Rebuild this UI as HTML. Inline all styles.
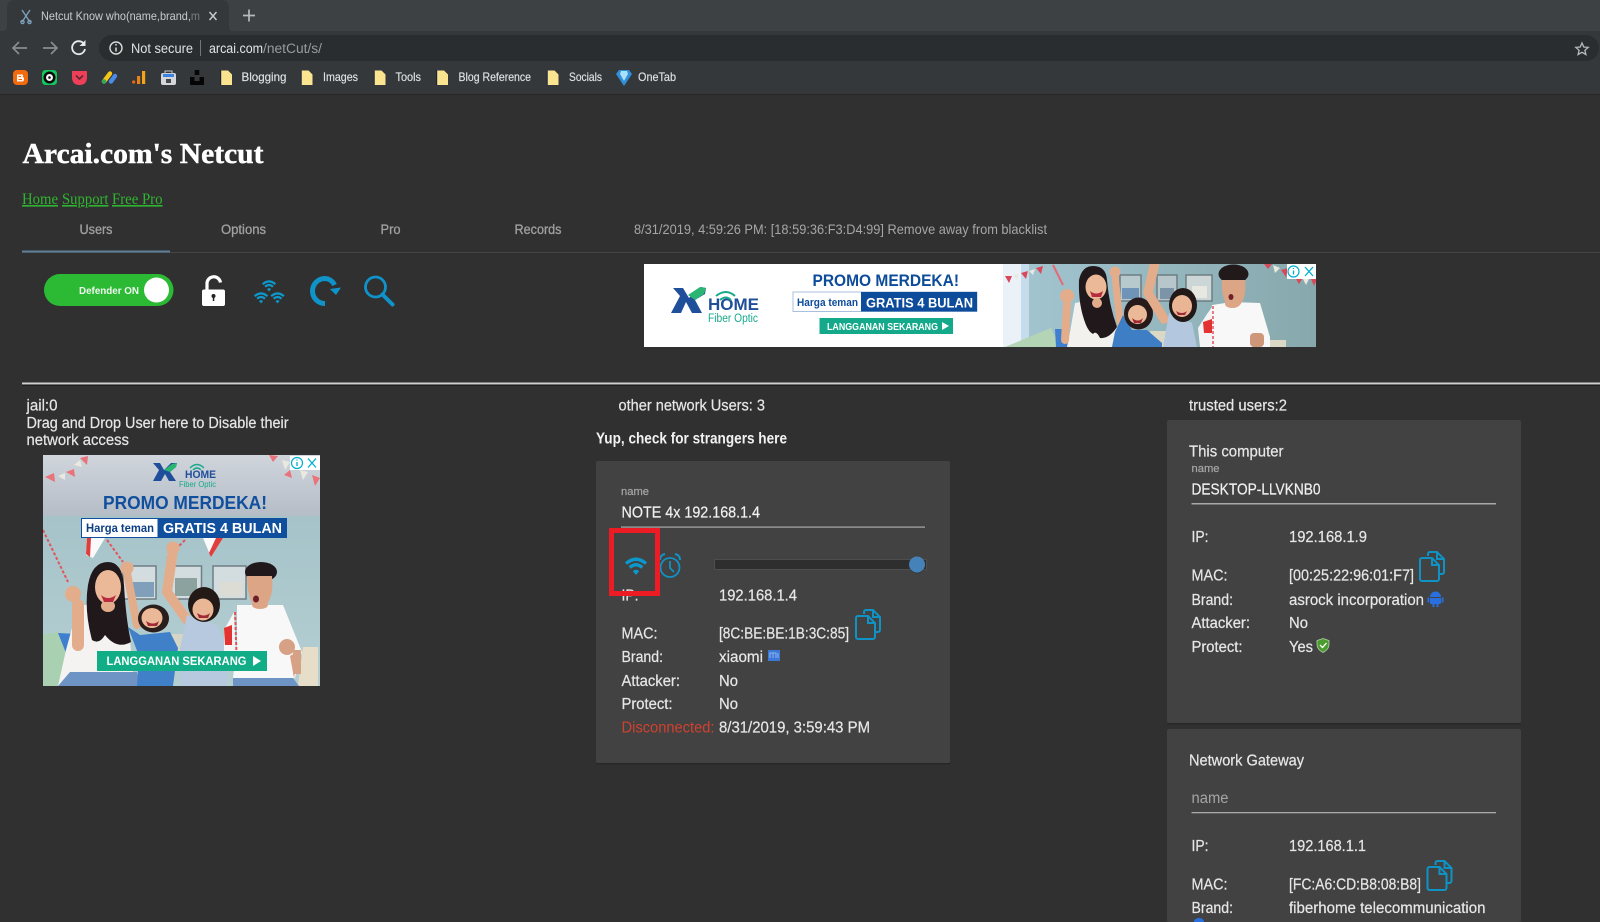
<!DOCTYPE html>
<html lang="en"><head><meta charset="utf-8"><title>Netcut</title>
<style>
html,body{margin:0;padding:0;width:1600px;height:922px;overflow:hidden;background:#303030}
svg{display:block;position:absolute;left:0;top:0;filter:blur(.3px)}
text{font-family:"Liberation Sans",sans-serif;fill:#e6e6e6;stroke:#e6e6e6;stroke-width:.22px;font-size:15.5px;white-space:pre}
text[style]{stroke:none}
.se{font-family:"Liberation Serif",serif}
.g{fill:#a0a0a0;stroke:#a0a0a0;stroke-width:.3px;font-size:13.5px}
.b{fill:#dfe1e3;stroke:#dfe1e3;stroke-width:.15px;font-size:12px}
.l{fill:#a5a5a5;stroke:#a5a5a5;font-size:11px}
</style></head><body>
<svg width="1600" height="922" viewBox="0 0 1600 922" xmlns="http://www.w3.org/2000/svg">
<defs>
<g id="copy" fill="none" stroke="#0f93c4" stroke-width="2">
<path d="M9 5V3a2 2 0 0 1 2-2h7l7 7v13a2 2 0 0 1-2 2h-3"/>
<path d="M3 7h10l7 7v14a2 2 0 0 1-2 2H3a2 2 0 0 1-2-2V9a2 2 0 0 1 2-2z"/>
<path d="M13 7v7h7M18 1v7h7"/>
</g>
<g id="wifi" fill="none" stroke="#0d98cc">
<path d="M1 6.500Q11-2 21 6.500" stroke-width="3.400"/>
<path d="M4.800 10.500Q11 5 17.200 10.500" stroke-width="3.400"/>
<path d="M7.800 14Q11 11.500 14.200 14L11 18Z" fill="#0d98cc" stroke="none"/>
</g>
<clipPath id="c1"><rect x="644" y="264" width="672" height="83"/></clipPath>
<clipPath id="c2"><rect x="43" y="455" width="277" height="231"/></clipPath>
<linearGradient id="ceil" x1="0" y1="0" x2="0" y2="1"><stop offset="0" stop-color="#d0d5dc"/><stop offset="1" stop-color="#b4bcc6"/></linearGradient>
<linearGradient id="wall" x1="0" y1="0" x2="0" y2="1"><stop offset="0" stop-color="#a5c3c9"/><stop offset="1" stop-color="#b5cfd2"/></linearGradient>
<linearGradient id="wall1" x1="0" y1="0" x2="1" y2="0"><stop offset="0" stop-color="#a3c6d2"/><stop offset="1" stop-color="#87a8ac"/></linearGradient>
</defs>

<!-- browser chrome -->
<rect width="1600" height="31" fill="#3d4144"/>
<rect y="31" width="1600" height="63" fill="#35383b"/>
<rect y="94" width="1600" height="1" fill="#262626"/>
<path d="M0 31h3q4 0 4-4V8q0-8 8-8h206q8 0 8 8v19q0 4 4 4h3z" fill="#35383b"/>
<g fill="none" stroke="#7fa3bd" stroke-width="1.300"><path d="M22 10l8 12M30 10l-8 12"/><circle cx="22.500" cy="22" r="1.600"/><circle cx="29.500" cy="22" r="1.600"/></g>
<text class="b" x="41" y="20" textLength="159" lengthAdjust="spacingAndGlyphs" style="fill:#c9ccce">Netcut Know who(name,brand,m</text>
<rect x="190" y="8" width="12" height="16" fill="#35383b" opacity=".55"/>
<path d="M209.500 12l7 8M216.500 12l-7 8" stroke="#c5c8ca" stroke-width="1.500"/>
<path d="M243 15.500h12M249 9.500v12" stroke="#b7babc" stroke-width="1.700"/>
<path d="M13 48h14M19 42l-6 6 6 6" fill="none" stroke="#898c8f" stroke-width="1.700"/>
<path d="M43 48h14M51 42l6 6-6 6" fill="none" stroke="#898c8f" stroke-width="1.700"/>
<path d="M84 44a6.500 6.500 0 1 0 1 5" fill="none" stroke="#e8e9ea" stroke-width="1.800"/><path d="M85.500 40v6h-6z" fill="#e8e9ea"/>
<rect x="99" y="35" width="1500" height="26" rx="13" fill="#2a2d2f"/>
<circle cx="116" cy="48" r="6" fill="none" stroke="#dcdcdc" stroke-width="1.400"/><path d="M116 47.500v4M116 44v1.500" stroke="#dcdcdc" stroke-width="1.500"/>
<text x="131" y="53" textLength="62" lengthAdjust="spacingAndGlyphs" style="font-size:13.500px;fill:#dfe1e3">Not secure</text>
<rect x="200" y="40" width="1" height="16" fill="#74777a"/>
<text x="209" y="53" textLength="54" lengthAdjust="spacingAndGlyphs" style="font-size:13.500px;fill:#e3e4e5">arcai.com</text>
<text x="263" y="53" textLength="59" lengthAdjust="spacingAndGlyphs" style="font-size:13.500px;fill:#999c9f">/netCut/s/</text>
<path d="M1582 43l1.800 4 4.400.4-3.300 2.900 1 4.300-3.900-2.300-3.900 2.300 1-4.300-3.300-2.900 4.400-.4z" fill="none" stroke="#b8bbbe" stroke-width="1.300"/>

<!-- bookmarks -->
<rect x="13" y="70" width="15" height="15" rx="4" fill="#f26a0e"/><path d="M17 74.500h4a1.500 1.500 0 0 1 2 2v1h1v2a2 2 0 0 1-2 2h-5z" fill="#fdf3ea"/><rect x="18.500" y="76" width="2.500" height="1" fill="#f26a0e"/><rect x="18.500" y="79" width="3.500" height="1" fill="#f26a0e"/>
<rect x="42" y="70" width="15" height="15" rx="3.500" fill="#12c85e"/><circle cx="49.500" cy="77.500" r="6" fill="#0a0a0a"/><circle cx="49.500" cy="77.500" r="3.500" fill="#f4f4f4"/><circle cx="49.500" cy="77.500" r="1.300" fill="#111"/>
<path d="M72 71h15v6q0 8-7.500 8t-7.500-8z" fill="#ee3f58"/><path d="M76 75.500l3.500 3.500 3.500-3.500" fill="none" stroke="#5d2733" stroke-width="1.600"/>
<path d="M104 81.500l6-8" stroke="#f5c518" stroke-width="4.400" stroke-linecap="round"/><path d="M111 81.500l4-5.500" stroke="#4a8ae8" stroke-width="4.400" stroke-linecap="round"/><circle cx="104" cy="81.500" r="2.300" fill="#3aa757"/>
<circle cx="133.700" cy="82" r="1.600" fill="#e96b13"/><rect x="137" y="76" width="3.200" height="8" fill="#e9811a"/><rect x="142" y="71" width="3.200" height="13" fill="#f5a317"/>
<rect x="161" y="73" width="15" height="12" rx="2" fill="#d4d6d9"/><rect x="165" y="71" width="7" height="3" fill="none" stroke="#c6c8cb"/><rect x="163" y="74" width="11" height="3" fill="#3b83e0"/><rect x="166" y="79" width="5" height="4" fill="#45494c"/>
<path d="M190 77h4.500v4h5v-4h4.500v8h-14zM194.700 70h4.600v5h-4.600z" fill="#050505"/>
<g fill="#fbe48f">
<path d="M221 70.500h7l4 4v10.500h-11z"/><path d="M301.500 70.500h7l4 4v10.500h-11z"/><path d="M374.500 70.500h7l4 4v10.500h-11z"/><path d="M437 70.500h7l4 4v10.500h-11z"/><path d="M547.500 70.500h7l4 4v10.500h-11z"/>
</g>
<g fill="#15193a"><rect x="220.300" y="70.500" width=".9" height="14.500"/><rect x="300.800" y="70.500" width=".9" height="14.500"/><rect x="373.800" y="70.500" width=".9" height="14.500"/><rect x="436.300" y="70.500" width=".9" height="14.500"/><rect x="546.800" y="70.500" width=".9" height="14.500"/></g>
<text class="b" x="241.500" y="81" textLength="45" lengthAdjust="spacingAndGlyphs">Blogging</text>
<text class="b" x="323" y="81" textLength="35" lengthAdjust="spacingAndGlyphs">Images</text>
<text class="b" x="395.500" y="81" textLength="25.500" lengthAdjust="spacingAndGlyphs">Tools</text>
<text class="b" x="458.500" y="81" textLength="72.500" lengthAdjust="spacingAndGlyphs">Blog Reference</text>
<text class="b" x="569" y="81" textLength="33" lengthAdjust="spacingAndGlyphs">Socials</text>
<path d="M619 70h10l3 4-8 12-8-12z" fill="#2f8fd8"/><path d="M621 71h6l1 3-4 7-4-7z" fill="#a9e0f8"/>
<text class="b" x="638" y="81" textLength="38" lengthAdjust="spacingAndGlyphs">OneTab</text>

<!-- header -->
<text class="se" x="22.500" y="163" textLength="241" lengthAdjust="spacingAndGlyphs" style="font-size:29px;font-weight:bold;fill:#fff;stroke:#fff;stroke-width:.45px">Arcai.com's Netcut</text>
<text class="se" x="22" y="204" textLength="36" lengthAdjust="spacingAndGlyphs" style="fill:#2fb52f;font-size:16px;text-decoration:underline">Home</text>
<text class="se" x="62" y="204" textLength="46.500" lengthAdjust="spacingAndGlyphs" style="fill:#2fb52f;font-size:16px;text-decoration:underline">Support</text>
<text class="se" x="112" y="204" textLength="50.500" lengthAdjust="spacingAndGlyphs" style="fill:#2fb52f;font-size:16px;text-decoration:underline">Free Pro</text>
<text class="g" x="79.500" y="234" textLength="33" lengthAdjust="spacingAndGlyphs">Users</text>
<text class="g" x="221" y="234" textLength="45" lengthAdjust="spacingAndGlyphs">Options</text>
<text class="g" x="380.500" y="234" textLength="20" lengthAdjust="spacingAndGlyphs">Pro</text>
<text class="g" x="514.500" y="234" textLength="47" lengthAdjust="spacingAndGlyphs">Records</text>
<text class="g" x="634" y="234" textLength="413" lengthAdjust="spacingAndGlyphs" style="fill:#a6a6a6;font-size:14px">8/31/2019, 4:59:26 PM: [18:59:36:F3:D4:99] Remove away from blacklist</text>
<rect x="22" y="252" width="1578" height="1" fill="#454545"/>
<rect x="22" y="250.500" width="148" height="2" fill="#5d7f98"/>

<!-- toolbar icons -->
<rect x="44" y="274" width="129.500" height="32" rx="16" fill="#2cba35"/>
<text x="79" y="294" textLength="60" lengthAdjust="spacingAndGlyphs" style="font-size:10.500px;font-weight:bold;fill:#eef9ee">Defender ON</text>
<ellipse cx="156.500" cy="290" rx="12.500" ry="12.500" fill="#fff"/>
<path d="M207 291v-7a6.800 6.800 0 0 1 13.500-1.500" fill="none" stroke="#fff" stroke-width="3.200"/>
<rect x="202" y="289.500" width="23" height="16.500" rx="2" fill="#fff"/>
<circle cx="213.500" cy="296" r="2" fill="#222"/><rect x="212.800" y="296" width="1.500" height="5" fill="#222"/>
<use href="#wifi" transform="translate(262 280) scale(.64)"/>
<use href="#wifi" transform="translate(254 292) scale(.64)"/>
<use href="#wifi" transform="translate(270.500 292) scale(.64)"/>
<path d="M325 303.500a12.500 12.500 0 0 1 0-25 11 11 0 0 1 9.500 6.500" fill="none" stroke="#0f93c9" stroke-width="5"/>
<path d="M341 287.500l-5 7.500-6-6z" fill="#0f93c9"/>
<circle cx="375.500" cy="287" r="10" fill="none" stroke="#0f93c9" stroke-width="2.800"/>
<path d="M382.500 294.500l10 10" stroke="#0f93c9" stroke-width="4" stroke-linecap="round"/>

<!-- wide ad -->
<g clip-path="url(#c1)">
<rect x="644" y="264" width="672" height="83" fill="#fff"/>
<rect x="1005" y="264" width="311" height="83" fill="url(#wall1)"/>
<rect x="1003" y="264" width="25" height="83" fill="#eaf2f8"/><rect x="1021" y="264" width="8" height="83" fill="#c6dcec"/>
<g fill="#d9485a"><path d="M1005 276l7 0-3 7zM1021 273l7-2-2 8zM1036 268l7-2-2 8zM1264 264l8 0-4 5zM1281 270l7-2-2 9zM1296 279l6 0-3 5zM1311 279l6 0-3 7z"/></g>
<g fill="#e9e9df"><path d="M1013 275l6-1-2 6zM1029 271l6-2-2 6zM1273 265l7 3-5 5zM1303 279l6 0-3 6z"/></g>
<!-- frames -->
<g stroke="#6f7d82" stroke-width="1.500"><rect x="1120" y="275" width="21" height="26" fill="#b7c9cc"/><rect x="1157" y="275" width="20" height="26" fill="#b7c6cb"/><rect x="1186" y="275" width="26" height="26" fill="#cdd6d6"/></g>
<rect x="1122" y="288" width="17" height="11" fill="#6f94b8"/><rect x="1160" y="288" width="14" height="11" fill="#7b94a8"/><rect x="1192" y="286" width="15" height="12" fill="#e8e8e2"/>
<!-- sofa -->
<path d="M1005 347l24-10 22-9 9 19z" fill="#b4d5b5"/><path d="M1055 329l11 0 4 18h-14z" fill="#3f7fd0"/>
<path d="M1150 331h20v16h-20zM1268 340h18v7h-18z" fill="#dcd8c6"/>
<!-- mother -->
<path d="M1075 303l12-2 33 28 1 18h-54l3-15z" fill="#f2f1ee"/>
<path d="M1065 340l2-36" stroke="#e3ad8c" stroke-width="8" stroke-linecap="round"/>
<circle cx="1067" cy="296" r="7" fill="#e3ad8c"/>
<path d="M1053 265l10 20" stroke="#e56b75" stroke-width="2"/>
<path d="M1086 325q-8-20-7-45 3-14 14-14 13 0 14 14 2 25 10 47-8 12-17 11-4-8-7-4-4-2-7-9z" fill="#20181a"/>
<ellipse cx="1096" cy="287" rx="10.500" ry="12.500" fill="#ebb997"/>
<ellipse cx="1097" cy="303" rx="5" ry="5" fill="#e3ad8c"/>
<path d="M1090 291q6 5 13 0l-2 6h-9z" fill="#b52b3f"/>
<!-- kid1 -->
<path d="M1120 323l-5-48" stroke="#e3ad8c" stroke-width="7" stroke-linecap="round"/>
<circle cx="1115" cy="272" r="5.500" fill="#e3ad8c"/>
<path d="M1115 332l8-17 9 15h15l15 13v4h-50z" fill="#3d7ec4"/>
<ellipse cx="1138.500" cy="313.500" rx="14.500" ry="16" fill="#261b1a"/>
<ellipse cx="1137.500" cy="314.500" rx="9.500" ry="9.500" fill="#ebb997"/>
<path d="M1132 318q6 5 11 0l-2 5h-7z" fill="#a02a35"/>
<!-- kid2 -->
<path d="M1164 319l-16-26 7-31" stroke="#e3ad8c" stroke-width="9.500" fill="none" stroke-linecap="round" stroke-linejoin="round"/>
<path d="M1163 347l6-34 23 10 5 24z" fill="#b3c8de"/>
<ellipse cx="1183" cy="305" rx="14" ry="17" fill="#211817"/>
<ellipse cx="1182" cy="306" rx="10" ry="11" fill="#e9b595"/>
<path d="M1176 311q6 4 11 0l-2 4h-7z" fill="#a02a35"/>
<!-- dad -->
<path d="M1212 305l20-3 28 1 10 34v10h-70l10-23z" fill="#f8f8f8"/>
<path d="M1198 328l9-14 5-7 3 38-15 2z" fill="#f4f4f4"/><path d="M1203 322l9-3 0 14-8 0z" fill="#e23232"/>
<path d="M1213 306v41" stroke="#e2545c" stroke-width="1.500" stroke-dasharray="3 2"/>
<ellipse cx="1233.500" cy="274" rx="15" ry="9.500" fill="#21191a"/>
<path d="M1222 280h23q2 18-6 26-6 4-12 0-6-10-5-26z" fill="#dca686"/>
<ellipse cx="1232" cy="304" rx="7" ry="4" fill="#dca686"/>
<ellipse cx="1231" cy="297" rx="2.500" ry="3" fill="#702028"/>
<rect x="1250" y="333" width="14" height="14" rx="4" fill="#cf977a"/>
<!-- logo -->
<path d="M673 288l10 0 6 10 12-11 5 1-1 6-10 6 7 13h-10l-6-11-5 11h-10l9-17z" fill="#1f4e9a"/><path d="M688 295l12-8 6 1-2 6-9 6z" fill="#2ab573"/>
<text x="708" y="310" textLength="51" lengthAdjust="spacingAndGlyphs" style="font-size:17px;font-weight:bold;fill:#1f4e9a">HOME</text>
<path d="M716 296q10-8 19 0M720 300q6-5 11 0" fill="none" stroke="#17a98a" stroke-width="2"/>
<text x="708" y="322" textLength="50" lengthAdjust="spacingAndGlyphs" style="font-size:11.500px;fill:#17a98a">Fiber Optic</text>
<text x="812.500" y="286" textLength="146.500" lengthAdjust="spacingAndGlyphs" style="font-size:16.500px;font-weight:bold;fill:#0d4c9a">PROMO MERDEKA!</text>
<rect x="793" y="292" width="184" height="19.500" fill="#fff" stroke="#a9c0dc"/>
<rect x="861" y="292" width="116" height="19.500" fill="#0d4c9a"/>
<text x="797" y="306" textLength="61" lengthAdjust="spacingAndGlyphs" style="font-size:11px;font-weight:bold;fill:#0d4c9a">Harga teman</text>
<text x="866" y="307.500" textLength="107" lengthAdjust="spacingAndGlyphs" style="font-size:14px;font-weight:bold;fill:#fff">GRATIS 4 BULAN</text>
<rect x="819.500" y="318" width="133.500" height="16" fill="#14a98a"/>
<text x="827" y="330" textLength="111" lengthAdjust="spacingAndGlyphs" style="font-size:10.500px;font-weight:bold;fill:#fff">LANGGANAN SEKARANG</text>
<path d="M942 322l7 4-7 4z" fill="#fff"/>
<rect x="1287" y="264" width="29" height="15" fill="#fff"/>
<circle cx="1293.500" cy="271.500" r="5.500" fill="none" stroke="#00aecd" stroke-width="1.200"/><path d="M1293.500 270.500v4M1293.500 268v1" stroke="#00aecd" stroke-width="1.300"/>
<path d="M1305 267l8 9M1313 267l-8 9" stroke="#00aecd" stroke-width="1.300"/>
</g>

<!-- hr -->
<rect x="22" y="382.500" width="1578" height="2" fill="#cfcfcf"/><rect x="22" y="384.500" width="1578" height="1" fill="#0d0d0d"/>

<!-- columns text -->
<text x="26.500" y="410.500" textLength="31" lengthAdjust="spacingAndGlyphs">jail:0</text>
<text x="26.500" y="428" textLength="262" lengthAdjust="spacingAndGlyphs">Drag and Drop User here to Disable their</text>
<text x="26.500" y="445" textLength="102.500" lengthAdjust="spacingAndGlyphs">network access</text>
<text x="618.500" y="410.500" textLength="146.500" lengthAdjust="spacingAndGlyphs">other network Users: 3</text>
<text x="596" y="443.500" textLength="191" lengthAdjust="spacingAndGlyphs" style="font-weight:bold;fill:#f2f2f2">Yup, check for strangers here</text>
<text x="1189" y="410.500" textLength="98" lengthAdjust="spacingAndGlyphs">trusted users:2</text>

<!-- square ad -->
<g clip-path="url(#c2)">
<rect x="43" y="455" width="277" height="62" fill="url(#ceil)"/>
<rect x="43" y="516" width="277" height="170" fill="url(#wall)"/>
<g fill="#e8737a"><path d="M45 477l9-4 1 9zM66 472l8-3 1 8zM80 458l8-2-1 9zM269 455l9 1-5 6zM284 475l6-5 2 8zM312 475l8 3-5 8z"/></g>
<g fill="#e9e9e0"><path d="M58 476l7-3 0 7zM74 465l6-5 2 7zM282 460l8 2-5 8zM300 470l8 2-5 8z"/></g>
<!-- frames -->
<g stroke="#6f7f85" stroke-width="1.500"><rect x="123" y="566" width="33" height="33" fill="#d3dde0"/><rect x="167.500" y="566" width="34" height="33" fill="#d3dde0"/><rect x="213" y="566" width="33" height="33" fill="#d3dde0"/></g>
<rect x="130" y="582" width="24" height="15" fill="#7f9fbb"/><rect x="175" y="578" width="22" height="18" fill="#8ba29f"/><rect x="220" y="582" width="22" height="14" fill="#dcdcd4"/>
<!-- flags and sticks -->
<path d="M87 538h18l-12 20-7-3zM203 538h20l-12 19z" fill="#fafafa"/><path d="M87 538h4l-1 19-4-3zM216 538h7l-12 19-2-4z" fill="#e23d3d"/>
<path d="M43 530l25 52M107 540l16 22M185 540l-18 18" stroke="#e2545c" stroke-width="2" stroke-dasharray="3 2" fill="none"/>
<!-- sofa -->
<path d="M43 635l15-3 10 26-5 14-5 14H43z" fill="#a9d0b0"/><path d="M58 633l19 1 0 24-9 0z" fill="#3f7fd0"/>
<path d="M303 647h15v39h-20z" fill="#e6dec8"/><rect x="170" y="634" width="20" height="20" fill="#d6d6c6"/>
<!-- mother -->
<path d="M78 606l22-3 30 37 4 46H58l8-36z" fill="#f4f3f1"/>
<path d="M78 645l0-40" stroke="#e3ad8c" stroke-width="12" stroke-linecap="round"/>
<circle cx="73" cy="594" r="8" fill="#e3ad8c"/>
<path d="M92 640q-8-30-4-55 4-23 20-23 14 0 16 23 2 35 7 57-14 8-26-7-6 10-13 5z" fill="#20181a"/>
<ellipse cx="108" cy="587" rx="13" ry="17" fill="#ebb997"/>
<ellipse cx="108" cy="606" rx="7" ry="6" fill="#e3ad8c"/>
<path d="M101 595q7 6 15 0l-3 7h-9z" fill="#b92c40"/>
<path d="M58 686l12-14h67l4 14z" fill="#6d94c4"/>
<!-- kid1 -->
<path d="M137 625l-10-52" stroke="#e3ad8c" stroke-width="8" stroke-linecap="round"/>
<circle cx="127" cy="568" r="6.500" fill="#e3ad8c"/>
<path d="M128 627l12 8 30-3 8 16-5 38h-36l2-30z" fill="#3f80c8"/>
<ellipse cx="153.500" cy="618.500" rx="15.500" ry="14" fill="#2a1e1c"/>
<ellipse cx="152" cy="618" rx="10.500" ry="10" fill="#ebb997"/>
<path d="M146 621q7 5 13 0l-2 5h-9z" fill="#9f2a35"/>
<!-- kid2 -->
<path d="M187 620l-20-28 6-42" stroke="#e3ad8c" stroke-width="10" fill="none" stroke-linecap="round" stroke-linejoin="round"/>
<circle cx="173" cy="548" r="6.500" fill="#e3ad8c"/>
<path d="M187 615l30 10 10 20 0 41h-47l0-38z" fill="#b6c9de"/>
<ellipse cx="204" cy="604.500" rx="16" ry="17.500" fill="#231917"/>
<ellipse cx="203" cy="609.500" rx="10.500" ry="11" fill="#e9b696"/>
<path d="M197 613q7 5 13 0l-2 5h-9z" fill="#9f2a35"/>
<!-- dad -->
<path d="M237 605l46 0 19 47-7 26h-62l4-35z" fill="#f8f8f8"/>
<path d="M224 630l10-18 2 40-12 3z" fill="#f5f5f5"/><path d="M224 628l8-3 0 20-7 0z" fill="#e23232"/>
<path d="M235 612l2 55" stroke="#e2545c" stroke-width="2" stroke-dasharray="3 2"/>
<path d="M300 650l-6 28 -4-22z" fill="#d6a184"/><rect x="293" y="650" width="8" height="24" fill="#d6a184"/>
<circle cx="287" cy="647" r="8" fill="#d6a184"/>
<ellipse cx="261" cy="572" rx="16" ry="10" fill="#20181a"/>
<path d="M247 576h25q2 22-7 30-6 4-11 0-7-10-7-30z" fill="#dca686"/>
<ellipse cx="260" cy="605" rx="8" ry="4" fill="#dca686"/>
<ellipse cx="256" cy="599" rx="3" ry="3.500" fill="#6d1f27"/>
<path d="M233 678h60l6 8h-66z" fill="#6d94c4"/>
<!-- text -->
<path d="M153 463l7 0 4 7 7-7 6 0-1 4-6 5 6 9h-7l-4-7-4 7h-8l6-11z" fill="#1f4e9a"/><path d="M164 470l8-6 5-1-1 4-6 5z" fill="#2ab573"/>
<text x="185" y="478" textLength="31" lengthAdjust="spacingAndGlyphs" style="font-size:11px;font-weight:bold;fill:#1f4e9a">HOME</text>
<path d="M190 468q7-7 14 0M193 470q4-4 8 0" fill="none" stroke="#17a98a" stroke-width="1.300"/>
<text x="179" y="487" textLength="37" lengthAdjust="spacingAndGlyphs" style="font-size:8.500px;fill:#17a98a">Fiber Optic</text>
<text x="103" y="509" textLength="164" lengthAdjust="spacingAndGlyphs" style="font-size:18.500px;font-weight:bold;fill:#0f4f9e">PROMO MERDEKA!</text>
<rect x="81" y="518" width="206" height="20" fill="#0f4f9e"/>
<rect x="82" y="519" width="75.500" height="18" fill="#fff"/>
<text x="86" y="532" textLength="68" lengthAdjust="spacingAndGlyphs" style="font-size:11.500px;font-weight:bold;fill:#0d3f86">Harga teman</text>
<text x="163" y="533" textLength="119" lengthAdjust="spacingAndGlyphs" style="font-size:14.500px;font-weight:bold;fill:#fff">GRATIS 4 BULAN</text>
<rect x="97" y="651" width="170" height="20" fill="#10ad86"/>
<text x="106.500" y="665" textLength="140" lengthAdjust="spacingAndGlyphs" style="font-size:12px;font-weight:bold;fill:#fff">LANGGANAN SEKARANG</text>
<path d="M253 656l8 5-8 5z" fill="#fff"/>
<rect x="290" y="456" width="30" height="14" fill="#fff"/>
<circle cx="297" cy="463" r="5.500" fill="none" stroke="#00aecd" stroke-width="1.200"/><path d="M297 462v4M297 459.500v1" stroke="#00aecd" stroke-width="1.300"/>
<path d="M308 458.500l8 9M316 458.500l-8 9" stroke="#00aecd" stroke-width="1.300"/>
</g>

<!-- middle card -->
<rect x="596" y="461" width="354" height="302" rx="2" fill="#424242"/>
<rect x="596" y="763" width="354" height="1.500" fill="#272727"/>
<text class="l" x="621" y="495" textLength="28" lengthAdjust="spacingAndGlyphs">name</text>
<text x="621.500" y="517.500" textLength="138.500" lengthAdjust="spacingAndGlyphs" style="fill:#f0f0f0;stroke:#f0f0f0;stroke-width:.22px">NOTE 4x 192.168.1.4</text>
<rect x="621" y="526.500" width="304" height="1.200" fill="#a9a9a9"/>
<use href="#wifi" x="625" y="557"/>
<g fill="none" stroke="#0f93c4" stroke-width="1.800">
<circle cx="670" cy="567.500" r="9.500"/><path d="M670 561v7l4 4"/><path d="M660 560q0-5 5-6M680 560q0-5-5-6" stroke-width="2"/>
</g>
<rect x="714.500" y="559.500" width="212" height="10" rx="1" fill="#2e2e2e" stroke="#555" stroke-width=".8"/>
<circle cx="917" cy="565.500" r="8" fill="#222" opacity=".35"/>
<circle cx="917" cy="564.500" r="8" fill="#4482b8"/>
<text x="621.500" y="600.500" textLength="17" lengthAdjust="spacingAndGlyphs">IP:</text>
<text x="719" y="600.500" textLength="78" lengthAdjust="spacingAndGlyphs">192.168.1.4</text>
<text x="621.500" y="638.500" textLength="36" lengthAdjust="spacingAndGlyphs">MAC:</text>
<text x="719" y="638.500" textLength="130" lengthAdjust="spacingAndGlyphs">[8C:BE:BE:1B:3C:85]</text>
<text x="621.500" y="662" textLength="41.500" lengthAdjust="spacingAndGlyphs">Brand:</text>
<text x="719" y="662" textLength="44" lengthAdjust="spacingAndGlyphs">xiaomi</text>
<text x="621.500" y="686" textLength="58.500" lengthAdjust="spacingAndGlyphs">Attacker:</text>
<text x="719" y="686" textLength="19" lengthAdjust="spacingAndGlyphs">No</text>
<text x="621.500" y="709" textLength="51" lengthAdjust="spacingAndGlyphs">Protect:</text>
<text x="719" y="709" textLength="19" lengthAdjust="spacingAndGlyphs">No</text>
<text x="621.500" y="732.500" textLength="93" lengthAdjust="spacingAndGlyphs" style="fill:#d0412f">Disconnected:</text>
<text x="719" y="732.500" textLength="151" lengthAdjust="spacingAndGlyphs">8/31/2019, 3:59:43 PM</text>
<use href="#copy" x="855" y="609"/>
<rect x="768" y="650" width="12" height="11" fill="#3b78d8"/><path d="M770 658v-5h3v5M773 653h3v5M778 653v5" fill="none" stroke="#8fb3ea" stroke-width="1"/>
<rect x="611.500" y="530.500" width="46" height="63" fill="none" stroke="#ed1c24" stroke-width="5"/>

<!-- right cards -->
<rect x="1167" y="420" width="354" height="303" rx="2" fill="#424242"/>
<rect x="1167" y="723" width="354" height="1.500" fill="#272727"/>
<rect x="1167" y="729" width="354" height="193" rx="2" fill="#424242"/>
<text x="1189" y="456.500" textLength="94.500" lengthAdjust="spacingAndGlyphs">This computer</text>
<text class="l" x="1191.500" y="472" textLength="28" lengthAdjust="spacingAndGlyphs">name</text>
<text x="1191.500" y="494.500" textLength="129" lengthAdjust="spacingAndGlyphs" style="fill:#f0f0f0;stroke:#f0f0f0;stroke-width:.22px">DESKTOP-LLVKNB0</text>
<rect x="1191.500" y="503" width="304.500" height="1.500" fill="#a9a9a9"/>
<text x="1191.500" y="542" textLength="17" lengthAdjust="spacingAndGlyphs">IP:</text>
<text x="1289" y="542" textLength="78" lengthAdjust="spacingAndGlyphs">192.168.1.9</text>
<text x="1191.500" y="580.500" textLength="36" lengthAdjust="spacingAndGlyphs">MAC:</text>
<text x="1289" y="580.500" textLength="125" lengthAdjust="spacingAndGlyphs">[00:25:22:96:01:F7]</text>
<use href="#copy" x="1419" y="551"/>
<text x="1191.500" y="605" textLength="41.500" lengthAdjust="spacingAndGlyphs">Brand:</text>
<text x="1289" y="605" textLength="135" lengthAdjust="spacingAndGlyphs">asrock incorporation</text>
<path d="M1430 597a5.500 5.500 0 0 1 11 0zM1430 598h11v5a1 1 0 0 1-1 1h-9a1 1 0 0 1-1-1zM1432.500 604h2v3h-2zM1436.500 604h2v3h-2zM1427.500 597.500h1.800v5h-1.800zM1441.700 597.500h1.800v5h-1.800z" fill="#2a6fe0"/>
<text x="1191.500" y="628" textLength="58.500" lengthAdjust="spacingAndGlyphs">Attacker:</text>
<text x="1289" y="628" textLength="19" lengthAdjust="spacingAndGlyphs">No</text>
<text x="1191.500" y="652" textLength="51" lengthAdjust="spacingAndGlyphs">Protect:</text>
<text x="1289" y="652" textLength="24" lengthAdjust="spacingAndGlyphs">Yes</text>
<path d="M1323 638.500l6 2v4q0 5-6 8-6-3-6-8v-4z" fill="#4b9c2f" stroke="#b6cfa9" stroke-width=".8"/><path d="M1320 645l2.500 2.500 4-4.500" fill="none" stroke="#fff" stroke-width="1.300"/>

<text x="1189" y="765.500" textLength="115" lengthAdjust="spacingAndGlyphs">Network Gateway</text>
<text x="1191.500" y="803" textLength="37" lengthAdjust="spacingAndGlyphs" style="fill:#a5a5a5">name</text>
<rect x="1191.500" y="812" width="304.500" height="1.300" fill="#a9a9a9"/>
<text x="1191.500" y="851" textLength="17" lengthAdjust="spacingAndGlyphs">IP:</text>
<text x="1289" y="851" textLength="77" lengthAdjust="spacingAndGlyphs">192.168.1.1</text>
<text x="1191.500" y="889.500" textLength="36" lengthAdjust="spacingAndGlyphs">MAC:</text>
<text x="1289" y="889.500" textLength="132" lengthAdjust="spacingAndGlyphs">[FC:A6:CD:B8:08:B8]</text>
<use href="#copy" x="1426.500" y="860"/>
<text x="1191.500" y="913" textLength="41.500" lengthAdjust="spacingAndGlyphs">Brand:</text>
<text x="1289" y="913" textLength="196.500" lengthAdjust="spacingAndGlyphs">fiberhome telecommunication</text>
<path d="M1194 922a5 4 0 0 1 10 0z" fill="#2a6fe0"/>
</svg>
</body></html>
